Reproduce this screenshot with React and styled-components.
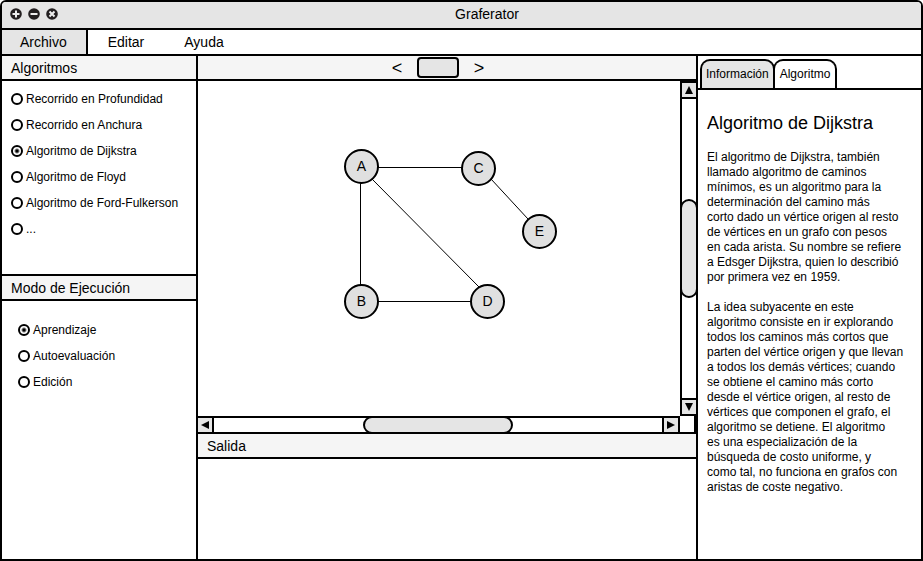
import React, { useState } from "react";
import styled, { createGlobalStyle } from "styled-components";

const ink = "#000";
const line = `2px solid ${ink}`;
const fill = "#e5e5e5";
const shade = "#f5f5f5";

const GlobalStyle = createGlobalStyle`
  *, *::before, *::after { box-sizing: border-box; }
  body {
    margin: 0;
    background: #fff;
    color: ${ink};
    font: 12px/15px "Liberation Sans", Arial, sans-serif;
  }
  button, input { font: inherit; color: inherit; }
`;

const Window = styled.div`
  display: flex;
  flex-direction: column;
  min-height: 100vh;
  border: ${line};
  border-radius: 6px 6px 0 0;
  overflow: hidden;
`;

const TitleBar = styled.header`
  display: flex;
  align-items: center;
  gap: 3px;
  height: 28px;
  padding: 0 8px 2px;
  background: ${fill};
  border-bottom: ${line};
`;

const WindowControls = styled.div`
  display: flex;
  gap: 6px;
`;

const ControlButton = styled.button`
  display: flex;
  width: 12px;
  height: 12px;
  padding: 0;
  border: 0;
  background: none;
`;

const Title = styled.h1`
  flex: 1;
  margin: 0;
  text-align: center;
  font-size: 14px;
  line-height: 24px;
  font-weight: 400;
`;

const MenuBar = styled.nav`
  display: flex;
  height: 26px;
  border-bottom: ${line};
`;

const MenuItem = styled.button`
  padding: ${(p) => (p.$active ? "0 19px 0 18px" : "0 18px 0 20px")};
  border: 0;
  border-right: 2px solid ${(p) => (p.$active ? ink : "transparent")};
  background: ${(p) => (p.$active ? fill : "transparent")};
  font-size: 14px;
  line-height: 24px;
`;

const Workspace = styled.div`
  flex: 1;
  display: grid;
  grid-template-columns: 196px minmax(0, 1fr) 225px;
`;

const Sidebar = styled.aside`
  border-right: ${line};
`;

const Main = styled.main`
  display: flex;
  flex-direction: column;
`;

const PanelHeading = styled.h2`
  height: 25px;
  margin: 0;
  padding: 0 9px;
  border-bottom: ${line};
  background: ${shade};
  font-size: 14px;
  line-height: 24px;
  font-weight: 400;
`;

const OptionGroup = styled.div`
  display: grid;
  align-content: start;
  gap: 12px;
  padding: ${(p) => (p.$indented ? "22px 16px" : "11px 9px 38px")};
  border-bottom: ${(p) => (p.$indented ? "0" : line)};
`;

const Option = styled.label`
  display: flex;
  align-items: center;
  gap: 3px;
  line-height: 14px;
  white-space: nowrap;
`;

const Radio = styled.input`
  appearance: none;
  width: 12px;
  height: 12px;
  margin: 0;
  border: ${line};
  border-radius: 50%;
  background: #fff;
  &:checked {
    background: radial-gradient(circle, ${ink} 1px, #fff 3px);
  }
`;

const Stepper = styled.div`
  display: flex;
  justify-content: center;
  align-items: center;
  gap: 12px;
  height: 25px;
  padding-right: 18px;
  border-bottom: ${line};
  background: ${shade};
`;

const StepButton = styled.button`
  width: 16px;
  padding: 0;
  border: 0;
  background: none;
  font-size: 18px;
  line-height: 20px;
`;

const StepField = styled.button`
  width: 42px;
  height: 21px;
  border: ${line};
  border-radius: 4px;
  background: ${fill};
`;

const Viewport = styled.div`
  display: grid;
  grid-template-columns: minmax(0, 1fr) 16px;
  grid-template-rows: 335px 18px;
`;

const Canvas = styled.svg`
  width: 100%;
  height: 100%;
  font-size: 14px;
`;

const ScrollBar = styled.div`
  display: flex;
  flex-direction: ${(p) => (p.$vertical ? "column" : "row")};
  border: 0 solid ${ink};
  border-width: ${(p) => (p.$vertical ? "2px 0 2px 2px" : "2px 2px 2px 0")};
`;

const ArrowButton = styled.button`
  display: flex;
  align-items: center;
  justify-content: center;
  width: 14px;
  height: 14px;
  padding: 0;
  border: 0;
  background: ${fill};
`;

const Track = styled.div`
  flex: 1;
  display: flex;
  flex-direction: ${(p) => (p.$vertical ? "column" : "row")};
  justify-content: center;
  border: 0 solid ${ink};
  border-width: ${(p) => (p.$vertical ? "2px 0" : "0 2px")};
`;

const Thumb = styled.div`
  flex: 0 0 33.3%;
  margin: ${(p) => (p.$vertical ? "0 -2px" : "-2px 0")};
  border: ${line};
  border-radius: 9px;
  background: ${fill};
  z-index: 1;
`;

const Corner = styled.div`
  border-right: ${line};
  border-bottom: ${line};
`;

const InfoPane = styled.section`
  border-left: ${line};
`;

const TabList = styled.div`
  display: flex;
  align-items: flex-end;
  height: 34px;
  padding: 3px 2px 0;
  border-bottom: ${line};
`;

const Tab = styled.button`
  height: 29px;
  padding: 0 4px;
  border: ${line};
  border-bottom: 0;
  border-radius: 10px 10px 0 0;
  background: ${(p) => (p["aria-selected"] ? fill : "#fff")};
  & + & {
    margin-left: -2px;
    padding: 0 5px;
  }
`;

const Article = styled.article`
  padding: 22px 9px;
  h2 {
    margin: 0 0 16px;
    font-size: 18px;
    line-height: 22px;
    font-weight: 400;
  }
  p {
    margin: 0 0 15px;
    white-space: pre-line;
  }
`;

const controls = [
  { label: "Agrandar", d: "M6 2.5v7M2.5 6h7" },
  { label: "Minimizar", d: "M2.5 6h7" },
  { label: "Cerrar", d: "M3.5 3.5l5 5M8.5 3.5l-5 5" },
];

const algorithms = [
  "Recorrido en Profundidad",
  "Recorrido en Anchura",
  "Algoritmo de Dijkstra",
  "Algoritmo de Floyd",
  "Algoritmo de Ford-Fulkerson",
  "...",
];

const modes = ["Aprendizaje", "Autoevaluación", "Edición"];

const paragraphs = [
  `El algoritmo de Dijkstra, también
llamado algoritmo de caminos
mínimos, es un algoritmo para la
determinación del camino más
corto dado un vértice origen al resto
de vértices en un grafo con pesos
en cada arista. Su nombre se refiere
a Edsger Dijkstra, quien lo describió
por primera vez en 1959.`,
  `La idea subyacente en este
algoritmo consiste en ir explorando
todos los caminos más cortos que
parten del vértice origen y que llevan
a todos los demás vértices; cuando
se obtiene el camino más corto
desde el vértice origen, al resto de
vértices que componen el grafo, el
algoritmo se detiene. El algoritmo
es una especialización de la
búsqueda de costo uniforme, y
como tal, no funciona en grafos con
aristas de coste negativo.`,
];

const nodes = {
  A: [163.5, 85.5],
  B: [163.5, 220.5],
  C: [280.5, 87.5],
  D: [289.5, 220.5],
  E: [341.5, 150.5],
};

const edges = [
  [162.5, 102, 162.5, 204],
  [180, 86.5, 264, 86.5],
  [174, 98, 281, 206],
  [180, 220.5, 273, 220.5],
  [293, 98, 330, 138],
];

const arrows = {
  up: "M5 1l4 8H1z",
  down: "M5 9L1 1h8z",
  left: "M1 5l8-4v8z",
  right: "M9 5L1 9V1z",
};

function Arrow({ direction, label }) {
  return (
    <ArrowButton aria-label={label}>
      <svg width="10" height="10" viewBox="0 0 10 10" aria-hidden="true">
        <path d={arrows[direction]} />
      </svg>
    </ArrowButton>
  );
}

function Options({ name, items, value, onChange, indented }) {
  return (
    <OptionGroup role="radiogroup" aria-label={name} $indented={indented}>
      {items.map((item) => (
        <Option key={item}>
          <Radio type="radio" name={name} checked={item === value} onChange={() => onChange(item)} />
          {item}
        </Option>
      ))}
    </OptionGroup>
  );
}

function Graph() {
  return (
    <Canvas role="img" aria-label="Grafo">
      {edges.map(([x1, y1, x2, y2]) => (
        <line key={`${x1}-${y1}`} x1={x1} y1={y1} x2={x2} y2={y2} stroke={ink} />
      ))}
      {Object.entries(nodes).map(([name, [x, y]]) => (
        <g key={name}>
          <circle cx={x} cy={y} r="16.5" fill="#e0e0e0" stroke={ink} strokeWidth="2" />
          <text x={x} y={Math.floor(y) + 5} textAnchor="middle">{name}</text>
        </g>
      ))}
    </Canvas>
  );
}

export default function App() {
  const [algorithm, setAlgorithm] = useState(algorithms[2]);
  const [mode, setMode] = useState(modes[0]);

  return (
    <>
      <GlobalStyle />
      <Window>
        <TitleBar>
          <WindowControls>
            {controls.map(({ label, d }) => (
              <ControlButton key={label} aria-label={label}>
                <svg width="12" height="12" viewBox="0 0 12 12" aria-hidden="true">
                  <circle cx="6" cy="6" r="5.8" fill="#231f20" />
                  <path d={d} stroke="#eee" strokeWidth="2" fill="none" />
                </svg>
              </ControlButton>
            ))}
          </WindowControls>
          <Title>Graferator</Title>
        </TitleBar>
        <MenuBar>
          <MenuItem $active>Archivo</MenuItem>
          <MenuItem>Editar</MenuItem>
          <MenuItem>Ayuda</MenuItem>
        </MenuBar>
        <Workspace>
          <Sidebar>
            <PanelHeading>Algoritmos</PanelHeading>
            <Options name="Algoritmos" items={algorithms} value={algorithm} onChange={setAlgorithm} />
            <PanelHeading>Modo de Ejecución</PanelHeading>
            <Options name="Modo de Ejecución" items={modes} value={mode} onChange={setMode} indented />
          </Sidebar>
          <Main>
            <Stepper>
              <StepButton aria-label="Anterior">&lt;</StepButton>
              <StepField aria-label="Paso" />
              <StepButton aria-label="Siguiente">&gt;</StepButton>
            </Stepper>
            <Viewport>
              <Graph />
              <ScrollBar $vertical>
                <Arrow direction="up" label="Subir" />
                <Track $vertical>
                  <Thumb $vertical />
                </Track>
                <Arrow direction="down" label="Bajar" />
              </ScrollBar>
              <ScrollBar>
                <Arrow direction="left" label="Izquierda" />
                <Track>
                  <Thumb />
                </Track>
                <Arrow direction="right" label="Derecha" />
              </ScrollBar>
              <Corner />
            </Viewport>
            <PanelHeading>Salida</PanelHeading>
          </Main>
          <InfoPane>
            <TabList role="tablist">
              <Tab role="tab" aria-selected={true}>Información</Tab>
              <Tab role="tab" aria-selected={false}>Algoritmo</Tab>
            </TabList>
            <Article>
              <h2>Algoritmo de Dijkstra</h2>
              {paragraphs.map((text) => (
                <p key={text}>{text}</p>
              ))}
            </Article>
          </InfoPane>
        </Workspace>
      </Window>
    </>
  );
}
